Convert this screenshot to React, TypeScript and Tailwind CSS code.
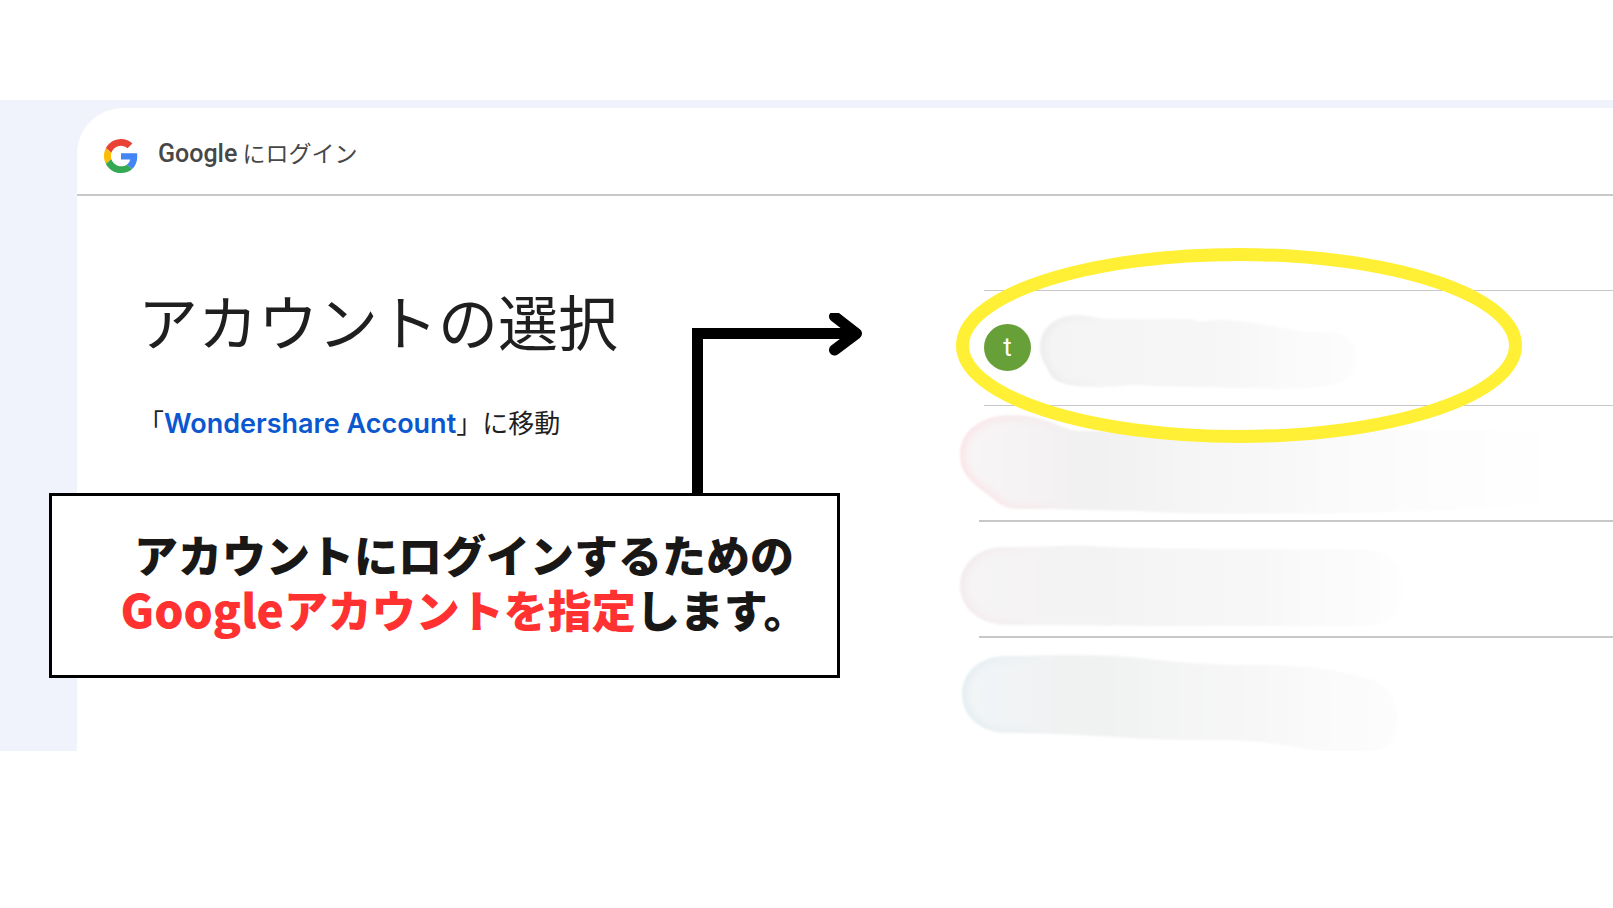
import React from "react";
import { clsx } from "clsx";

/* --------------------------------------------------------------------------
   Types
   -------------------------------------------------------------------------- */

interface Account {
  id: string;
  initial?: string;
  /** Top of the row on the drawing canvas */
  top: number;
  shape: string;
  stops: [string, string][];
  edge: string;
  divider: string;
}

/* --------------------------------------------------------------------------
   Data
   -------------------------------------------------------------------------- */

const ACCOUNTS: Account[] = [
  {
    id: "first",
    initial: "t",
    top: 291,
    shape:
      "M1040 345C1042 325 1058 315 1078 315C1090 315 1096 319 1115 319H1188C1196 319 1197 323 1206 321C1222 318 1240 321 1262 324L1305 332H1328C1346 332 1357 343 1357 358C1357 375 1345 385 1318 387C1285 391 1220 387 1150 386C1130 383 1125 387 1100 387C1075 387 1056 385 1050 374C1046 365 1039 358 1040 345Z",
    stops: [
      ["0", "#f4f4f4"],
      ["0.5", "#f6f6f6"],
      ["1", "#fdfdfd"],
    ],
    edge: "#dfe3dd",
    divider: "border-b",
  },
  {
    id: "second",
    top: 406,
    shape:
      "M960 455C960 430 982 415 1012 415C1048 415 1060 430 1080 431C1180 430 1400 430 1560 430C1600 430 1600 485 1560 505C1450 512 1330 515 1180 513C1110 510 1060 509 1020 509C1000 509 996 500 983 491C968 480 960 470 960 455Z",
    stops: [
      ["0", "#f8f5f6"],
      ["0.2", "#f2f1f2"],
      ["0.45", "#f7f7f7"],
      ["0.75", "#fdfdfd"],
      ["1", "#ffffff"],
    ],
    edge: "#ffccd3",
    divider: "-ml-[5px] w-[calc(100%+5px)] border-b-2",
  },
  {
    id: "third",
    top: 522,
    shape:
      "M960 586C960 564 978 547 1004 547C1030 548 1050 545 1092 546C1130 549 1200 549 1360 549C1390 549 1404 566 1404 588C1404 612 1390 626 1365 626H1180C1110 626 1060 625 1008 625C980 625 960 608 960 586Z",
    stops: [
      ["0", "#f6f4f5"],
      ["0.3", "#f3f3f3"],
      ["0.7", "#f8f8f8"],
      ["1", "#fefefe"],
    ],
    edge: "#efdce6",
    divider: "-ml-[5px] w-[calc(100%+5px)] border-b-2",
  },
  {
    id: "fourth",
    top: 638,
    shape:
      "M962 694C962 672 980 656 1006 656C1040 656 1090 653 1140 658C1180 662 1200 665 1260 665C1310 665 1340 672 1365 677C1390 685 1398 700 1398 720C1398 738 1388 751 1372 752H1320C1290 746 1270 740 1200 740C1130 740 1080 733 1008 733C980 733 962 716 962 694Z",
    stops: [
      ["0", "#f2f5f7"],
      ["0.3", "#f0f1f1"],
      ["0.65", "#f7f7f7"],
      ["1", "#fdfdfd"],
    ],
    edge: "#cfe3e8",
    divider: "",
  },
];

/* --------------------------------------------------------------------------
   Sub-components
   -------------------------------------------------------------------------- */

function GoogleLogo({ className }: { className?: string }) {
  return (
    <svg className={className} viewBox="0 0 48 48" aria-hidden="true">
      <path fill="#EA4335" d="M24 9.5c3.54 0 6.71 1.22 9.21 3.6l6.85-6.85C35.9 2.38 30.47 0 24 0 14.62 0 6.51 5.38 2.56 13.22l7.98 6.19C12.43 13.72 17.74 9.5 24 9.5z" />
      <path fill="#4285F4" d="M46.98 24.55c0-1.57-.15-3.09-.38-4.55H24v9.02h12.94c-.58 2.96-2.26 5.48-4.78 7.18l7.73 6c4.51-4.18 7.09-10.36 7.09-17.65z" />
      <path fill="#FBBC05" d="M10.53 28.59c-.48-1.45-.76-2.99-.76-4.59s.27-3.14.76-4.59l-7.98-6.19C.92 16.46 0 20.12 0 24c0 3.88.92 7.54 2.56 10.78l7.97-6.19z" />
      <path fill="#34A853" d="M24 48c6.48 0 11.93-2.13 15.89-5.81l-7.73-6c-2.15 1.45-4.92 2.3-8.16 2.3-6.26 0-11.57-4.22-13.47-9.91l-7.98 6.19C6.51 42.62 14.62 48 24 48z" />
    </svg>
  );
}

/** Soft brush stroke that hides the account's name and address. */
function Smudge({ account }: { account: Account }) {
  const { id, top, shape, stops, edge } = account;
  return (
    <svg
      className="pointer-events-none absolute -left-7 top-0 h-[116px] w-[657px]"
      viewBox={`956 ${top} 657 116`}
      aria-hidden="true"
    >
      <defs>
        <linearGradient id={`fill-${id}`}>
          {stops.map(([offset, color]) => (
            <stop key={offset} offset={offset} stopColor={color} />
          ))}
        </linearGradient>
        <linearGradient id={`edge-${id}`}>
          <stop offset="0" stopColor={edge} />
          <stop offset="0.2" stopColor={edge} stopOpacity="0" />
        </linearGradient>
        <clipPath id={`clip-${id}`}>
          <path d={shape} />
        </clipPath>
        <filter id={`soft-${id}`}>
          <feGaussianBlur stdDeviation="1" />
        </filter>
        <filter id={`haze-${id}`}>
          <feGaussianBlur stdDeviation="4" />
        </filter>
      </defs>
      <g filter={`url(#soft-${id})`}>
        <path d={shape} fill={`url(#fill-${id})`} />
        <g clipPath={`url(#clip-${id})`}>
          <path
            d={shape}
            fill="none"
            stroke={`url(#edge-${id})`}
            strokeWidth="4"
            filter={`url(#haze-${id})`}
          />
        </g>
      </g>
    </svg>
  );
}

function AccountRow({ account }: { account: Account }) {
  return (
    <li className="relative last:-mb-px">
      <button
        type="button"
        aria-label={account.initial ? undefined : "アカウント"}
        className="flex h-[114px] w-full items-center pb-0.5"
      >
        {account.initial && (
          <span className="flex size-[47px] items-center justify-center rounded-full bg-[#67a038] font-[Roboto,sans-serif] text-[26px] leading-none text-white">
            {account.initial}
          </span>
        )}
      </button>
      <div className={clsx("border-[#c8c8c8]", account.divider)} />
      <Smudge account={account} />
    </li>
  );
}

/** Yellow ring drawn around the first account. */
function Highlight() {
  return (
    <svg
      className="pointer-events-none absolute -left-7 -top-[43px] z-10 h-[196px] w-[567px]"
      viewBox="0 0 567 196"
      aria-hidden="true"
    >
      <ellipse cx="283" cy="97.5" rx="276.5" ry="91" fill="none" stroke="#fff035" strokeWidth="13" />
    </svg>
  );
}

/** Boxed instruction with the arrow that leaves its top edge. */
function Callout() {
  return (
    <aside className="absolute left-[49px] top-[493px] w-[791px] border-3 border-black bg-white pb-[35px] pl-[39px] pt-[35px]">
      <p className="text-center font-['Liberation_Sans','Noto_Sans_CJK_JP',sans-serif] text-[44px] font-black leading-[54px] text-[#191817]">
        <span className="block">アカウントにログインするための</span>
        <span className="block">
          <span className="text-[#ff3131]">
            <span className="font-['Noto_Sans_CJK_JP',sans-serif] text-[46px] leading-none">Google</span>
            アカウントを指定
          </span>
          します。
        </span>
      </p>
      <svg
        className="absolute -top-[183px] left-[636px] h-[183px] w-[180px]"
        viewBox="0 0 180 183"
        fill="none"
        stroke="#000"
        strokeWidth="11"
        aria-hidden="true"
      >
        <path d="M9.5 183V20.5H165" />
        <path d="M146.5 3.5L168.5 20.5L146.5 37" strokeLinecap="round" strokeLinejoin="round" />
      </svg>
    </aside>
  );
}

/* --------------------------------------------------------------------------
   App
   -------------------------------------------------------------------------- */

export default function App() {
  return (
    <main className="relative min-h-screen overflow-hidden bg-white py-[100px] font-['Noto_Sans_CJK_JP',sans-serif]">
      <div className="bg-[#f0f3fb] pl-[77px] pt-2">
        <div className="overflow-hidden rounded-tl-[46px] bg-white">
          <header className="flex h-22 items-center gap-5 border-b-2 border-[#c8c8c8] pl-[27px] pt-1">
            <GoogleLogo className="mt-1.5 size-[34px]" />
            <p className="text-[23px] leading-8 text-[#474747]">
              <span className="font-[Roboto,sans-serif] text-[25px] font-medium">Google</span>{" "}
              にログイン
            </p>
          </header>

          <div className="grid grid-cols-[907fr_629fr]">
            <section className="pl-[61px] pt-20">
              <h1 className="text-[60px] leading-[88px] text-[#1f1f1f]">アカウントの選択</h1>
              <p className="mt-[38px] text-[26px] leading-10 text-[#1f1f1f]">
                「
                <a href="#account" className="font-[Inter,sans-serif] text-[27px] font-semibold text-[#0b57d0]">
                  Wondershare Account
                </a>
                」に移動
              </p>
            </section>

            <section className="pt-[94px]">
              <div className="relative border-t border-[#c8c8c8]">
                <ul>
                  {ACCOUNTS.map((account) => (
                    <AccountRow key={account.id} account={account} />
                  ))}
                </ul>
                <Highlight />
              </div>
            </section>
          </div>
        </div>
      </div>
      <Callout />
    </main>
  );
}
